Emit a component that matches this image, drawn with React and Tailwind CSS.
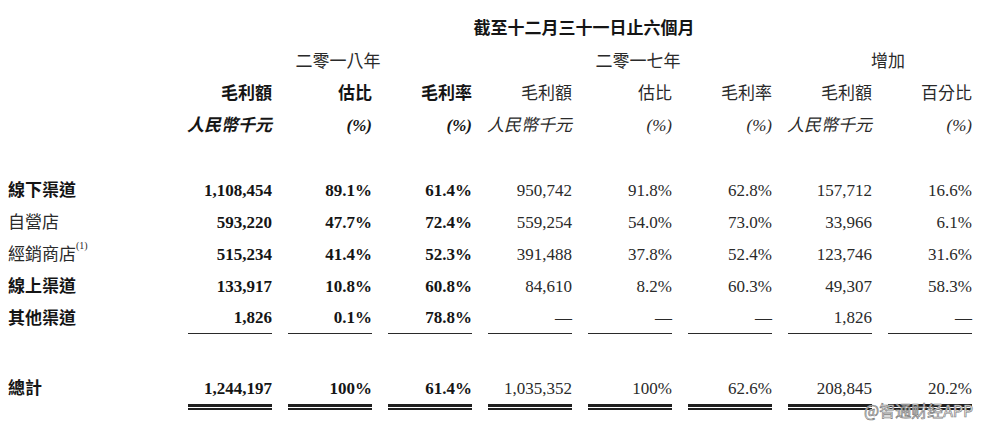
import React from "react";

const FONT = "font-['Liberation_Serif','Noto_Sans_CJK_TC',serif]";

const rows = [
  { label: "線下渠道", bold: true, v: ["1,108,454", "89.1%", "61.4%", "950,742", "91.8%", "62.8%", "157,712", "16.6%"] },
  { label: "自營店", bold: false, v: ["593,220", "47.7%", "72.4%", "559,254", "54.0%", "73.0%", "33,966", "6.1%"] },
  { label: "經銷商店", note: true, bold: false, v: ["515,234", "41.4%", "52.3%", "391,488", "37.8%", "52.4%", "123,746", "31.6%"] },
  { label: "線上渠道", bold: true, v: ["133,917", "10.8%", "60.8%", "84,610", "8.2%", "60.3%", "49,307", "58.3%"] },
  { label: "其他渠道", bold: true, v: ["1,826", "0.1%", "78.8%", "—", "—", "—", "1,826", "—"] },
];

const total = ["1,244,197", "100%", "61.4%", "1,035,352", "100%", "62.6%", "208,845", "20.2%"];

const heads = ["毛利額", "估比", "毛利率", "毛利額", "估比", "毛利率", "毛利額", "百分比"];
const units = ["人民幣千元", "(%)", "(%)", "人民幣千元", "(%)", "(%)", "人民幣千元", "(%)"];

function Cell({ children, bold, line }) {
  return (
    <div className="pl-4 h-full flex flex-col">
      <div
        className={`flex-1 flex items-center justify-end whitespace-nowrap ${bold ? "font-bold text-[#151515]" : "text-[#2a2a2a]"} ${line === "single" ? "border-b border-[#2a2a2a]" : ""}`}
      >
        {children}
      </div>
      {line === "double" && (
        <div>
          <div className="h-[3px] bg-[#1f1f1f]" />
          <div className="h-[1px]" />
          <div className="h-[2px] bg-[#1f1f1f]" />
        </div>
      )}
    </div>
  );
}

export default function App() {
  return (
    <div className={`relative w-[984px] h-[429px] bg-white overflow-hidden text-[17px] leading-none ${FONT}`}>
      <div className="pl-2 pt-3">
        {/* period title */}
        <div className="grid grid-cols-[164px_800px] h-8">
          <div />
          <div className="pl-6 flex items-center justify-center font-bold text-[#151515]">
            截至十二月三十一日止六個月
          </div>
        </div>

        {/* year groups */}
        <div className="grid grid-cols-[164px_300px_300px_200px] h-[34px]">
          <div />
          <div className="pl-8 flex items-center justify-center text-[#2a2a2a]">二零一八年</div>
          <div className="pl-8 flex items-center justify-center text-[#2a2a2a]">二零一七年</div>
          <div className="pl-8 flex items-center justify-center text-[#2a2a2a]">增加</div>
        </div>

        {/* column heads */}
        <div className="grid grid-cols-[164px_repeat(8,100px)] h-[31px]">
          <div />
          {heads.map((h, i) => (
            <Cell key={i} bold={i < 3}>{h}</Cell>
          ))}
        </div>
        <div className="grid grid-cols-[164px_repeat(8,100px)] h-8 italic">
          <div />
          {units.map((u, i) => (
            <Cell key={i} bold={i < 3}>{u}</Cell>
          ))}
        </div>

        <div className="h-[33px]" />

        {rows.map((r, ri) => (
          <div key={ri} className="grid grid-cols-[164px_repeat(8,100px)] h-8">
            <div className={`flex items-center ${r.bold ? "font-bold text-[#151515]" : "text-[#2a2a2a]"}`}>
              {r.label}
              {r.note && <sup className="text-[10px] -mt-1.5">(1)</sup>}
            </div>
            {r.v.map((v, i) => (
              <Cell key={i} bold={i < 3} line={ri === rows.length - 1 ? "single" : null}>{v}</Cell>
            ))}
          </div>
        ))}

        <div className="h-[38px]" />

        <div className="grid grid-cols-[164px_repeat(8,100px)] h-[38px]">
          <div className="flex items-center pb-1.5 font-bold text-[#151515]">總計</div>
          {total.map((v, i) => (
            <Cell key={i} bold={i < 3} line="double">{v}</Cell>
          ))}
        </div>
      </div>

      {/* watermark */}
      <div className="absolute left-[864px] top-[402px] text-[16px] leading-none text-white font-['Noto_Sans_CJK_SC',sans-serif] [-webkit-text-stroke:0.7px_#808080]">
        @智通财经APP
      </div>
    </div>
  );
}
